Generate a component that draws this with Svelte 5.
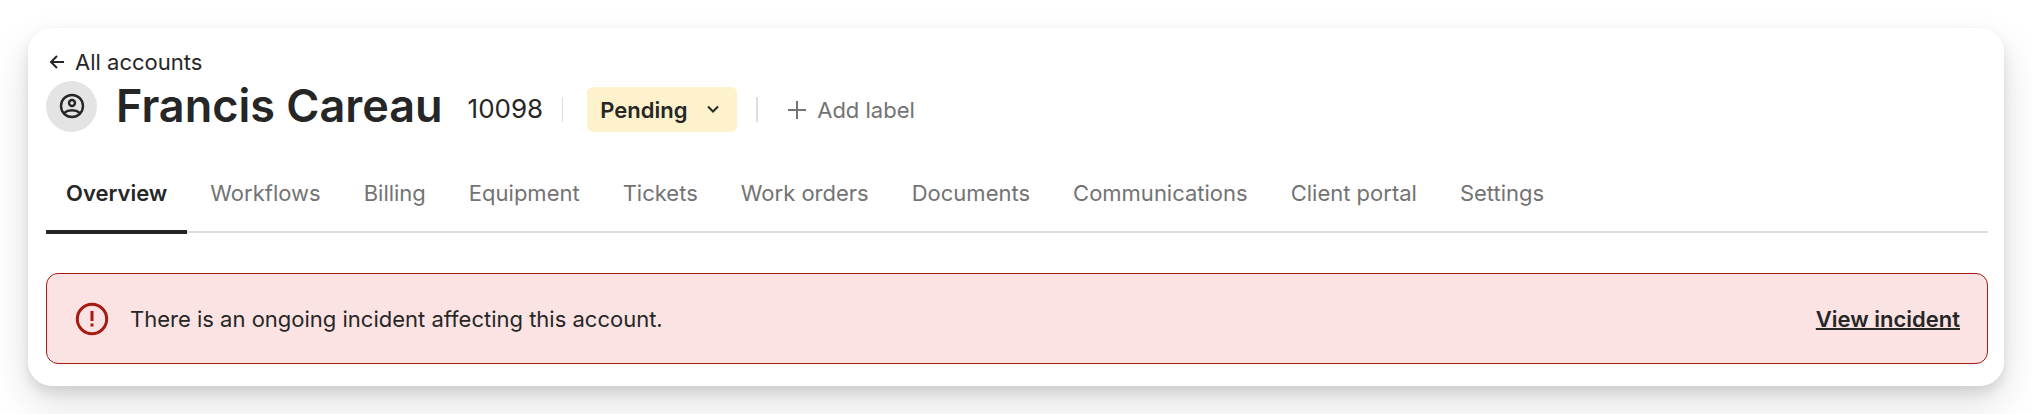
<script lang="ts">
    const account = { name: "Francis Careau", number: "10098" };
    const statuses = ["Pending"];
    const tabs = [
        "Overview",
        "Workflows",
        "Billing",
        "Equipment",
        "Tickets",
        "Work orders",
        "Documents",
        "Communications",
        "Client portal",
        "Settings",
    ];

    let status = $state("Pending");
    let activeTab = $state("Overview");
</script>

<main class="card">
    <header>
        <a class="back" href="#accounts">
            <svg width="16" height="16" viewBox="0 0 16 16" aria-hidden="true">
                <path d="M15 8H2M8 2L2 8l6 6" />
            </svg>
            All accounts
        </a>
        <div class="account">
            <span class="avatar">
                <svg width="26" height="26" viewBox="0 0 26 26" aria-hidden="true">
                    <circle cx="13" cy="13" r="11" />
                    <circle cx="13" cy="10" r="3" />
                    <path d="M5 20c4.500-3.600 11.500-3.600 16 0" />
                </svg>
            </span>
            <h1>{account.name}</h1>
            <span class="number">{account.number}</span>
            <span class="divider"></span>
            <div class="status">
                <select aria-label="Status" bind:value={status}>
                    {#each statuses as option (option)}
                        <option>{option}</option>
                    {/each}
                </select>
                <svg width="12" height="8" viewBox="0 0 12 8" aria-hidden="true">
                    <path d="M1 1.500l5 5 5-5" />
                </svg>
            </div>
            <span class="divider wide"></span>
            <button class="add-label">
                <svg width="18" height="18" viewBox="0 0 18 18" aria-hidden="true">
                    <path d="M9 0v18M0 9h18" />
                </svg>
                Add label
            </button>
        </div>
    </header>
    <div class="tabs" role="tablist">
        {#each tabs as tab (tab)}
            <button
                class="tab"
                class:active={tab === activeTab}
                role="tab"
                aria-selected={tab === activeTab}
                onclick={() => (activeTab = tab)}
            >{tab}</button>
        {/each}
    </div>
    <section class="alert" role="alert">
        <svg width="34" height="34" viewBox="0 0 34 34" aria-hidden="true">
            <circle cx="17" cy="17" r="14.700" />
            <path d="M17 9v10M17 21.500v3" />
        </svg>
        <p>There is an ongoing incident affecting this account.</p>
        <a href="#incident">View incident</a>
    </section>
</main>

<style>
    :global(body) {
        background-color: white;
    }

    .card {
        margin: 28px;
        padding: 20px 16px 22px 18px;
        border-radius: 24px;
        background-color: white;
        box-shadow: 0 6px 12px rgba(0, 0, 0, 0.1), 0 18px 40px rgba(0, 0, 0, 0.13);
        font-family: Inter, "Liberation Sans", sans-serif;
        font-size: 22px;
        line-height: 28px;
        color: #262626;
    }

    svg {
        fill: none;
        stroke: currentColor;
        stroke-width: 2;
        flex-shrink: 0;
    }

    .back {
        display: inline-flex;
        align-items: center;
        gap: 10px;
        padding-left: 3px;
        color: inherit;
        text-decoration: none;
        vertical-align: top;
    }

    .account {
        display: flex;
        align-items: center;
        margin-top: 4px;
    }

    .avatar {
        display: flex;
        align-items: center;
        justify-content: center;
        width: 51px;
        height: 51px;
        border-radius: 50%;
        background-color: #e4e4e4;
    }

    .avatar svg {
        stroke-width: 2.400;
    }

    h1 {
        margin: 0 25px 0 19px;
        font-size: 45px;
        line-height: 52px;
        font-weight: 600;
    }

    .number {
        margin-top: 5px;
        font-size: 26px;
    }

    .divider {
        width: 1px;
        height: 25px;
        margin: 6px 24px 0 19px;
        background-color: #dedede;
    }

    .divider.wide {
        width: 2px;
        margin: 6px 30px 0 19px;
    }

    .status {
        position: relative;
        margin-top: 6px;
    }

    .status svg {
        position: absolute;
        top: 18px;
        right: 18px;
        pointer-events: none;
    }

    select {
        display: block;
        appearance: none;
        height: 45px;
        margin: 0;
        padding: 2px 49px 0 13px;
        border: none;
        border-radius: 6px;
        background-color: #fdf2cc;
        color: inherit;
        font: inherit;
        font-weight: 600;
    }

    button {
        border: none;
        background: none;
        color: #737373;
        font: inherit;
        cursor: pointer;
    }

    .add-label {
        display: flex;
        align-items: center;
        gap: 11px;
        margin-top: 8px;
        padding: 0;
    }

    .tabs {
        display: flex;
        gap: 3px;
        margin-top: 34px;
        background: linear-gradient(#dedede, #dedede) 0 calc(100% - 1px) / 100% 2px no-repeat;
    }

    .tab {
        padding: 13px 20px 23px;
        border-bottom: 4px solid transparent;
    }

    .tab.active {
        border-bottom-color: #262626;
        color: #262626;
        font-weight: 600;
    }

    .alert {
        display: flex;
        align-items: center;
        gap: 21px;
        margin-top: 39px;
        padding: 28px 27px 27px 28px;
        border: 1px solid #a61b12;
        border-radius: 12px;
        background-color: #fae3e2;
    }

    .alert svg {
        stroke: #a61b12;
        stroke-width: 3;
    }

    .alert p {
        flex: 1;
        margin: 0;
    }

    .alert a {
        color: inherit;
        font-weight: 600;
        text-decoration-thickness: 2px;
    }
</style>
